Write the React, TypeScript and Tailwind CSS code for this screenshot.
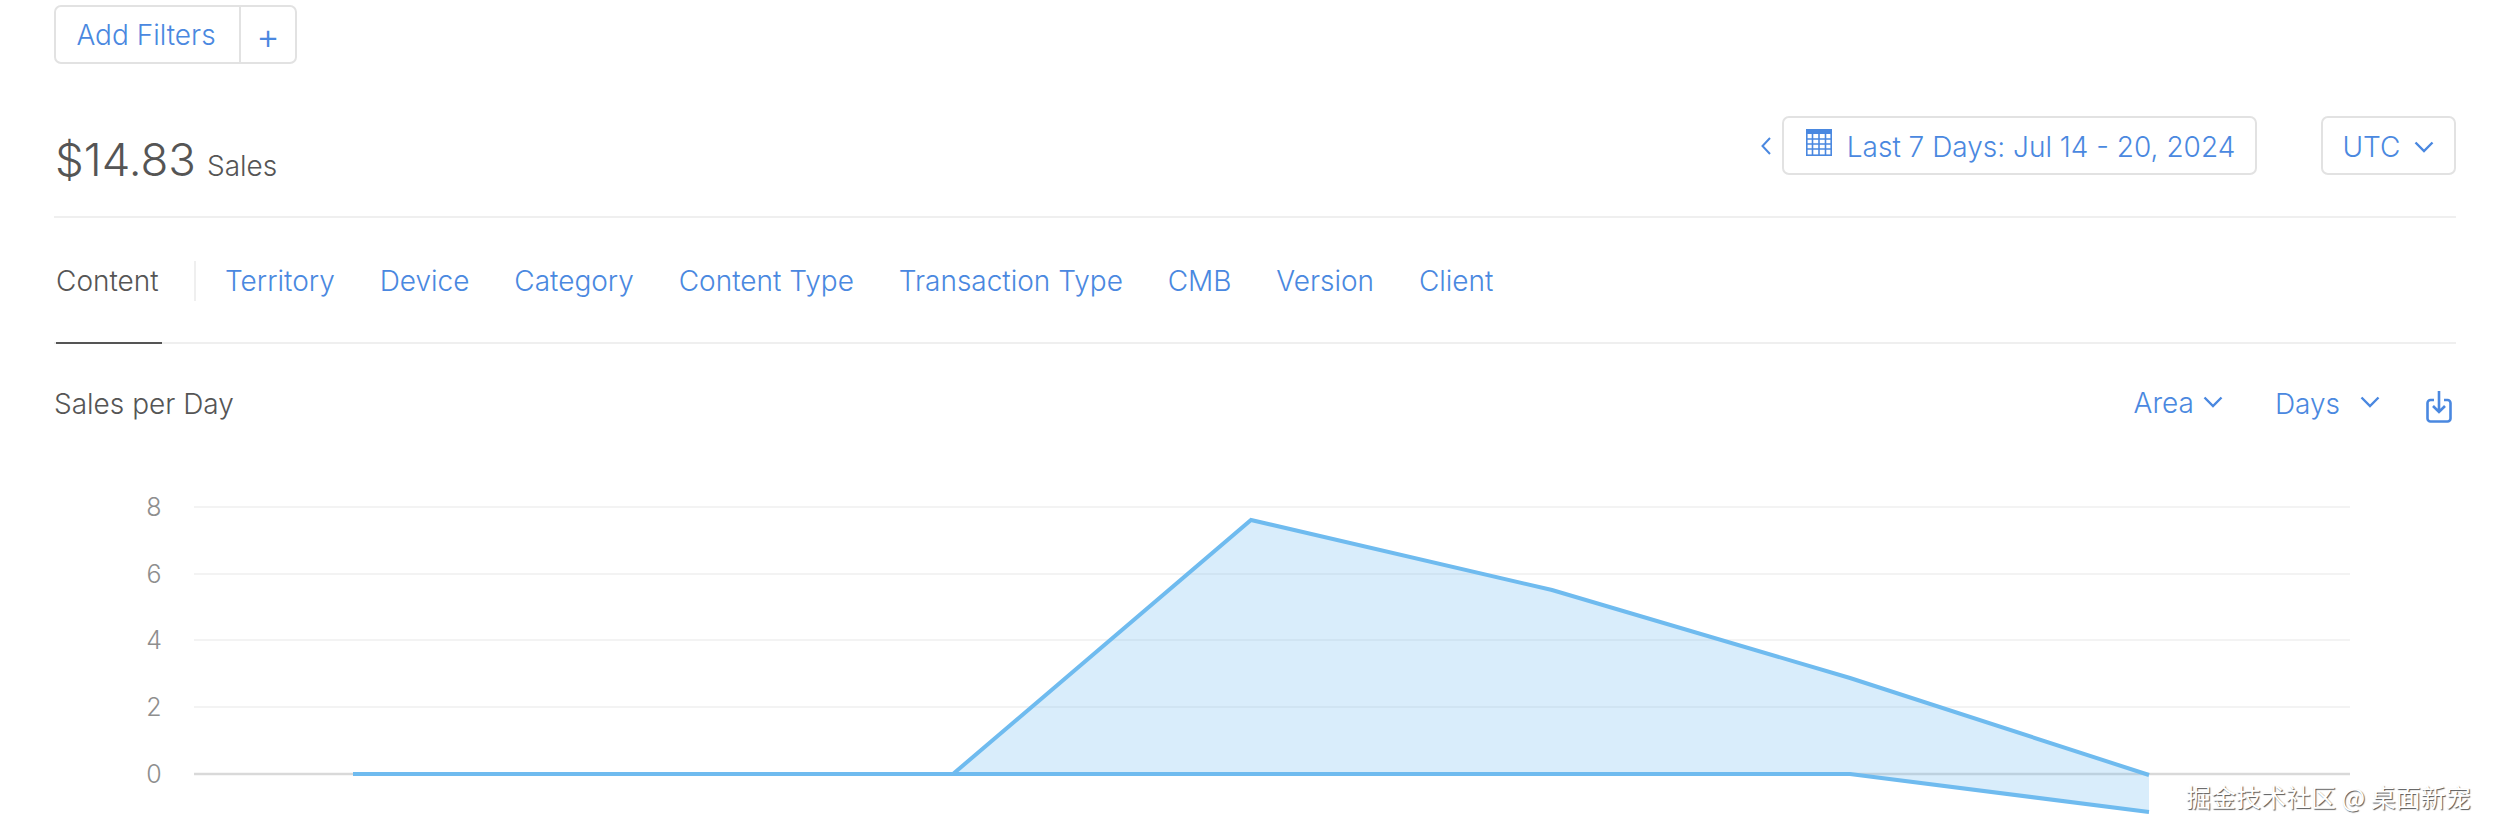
import React from 'react';

const tabs = ['Territory', 'Device', 'Category', 'Content Type', 'Transaction Type', 'CMB', 'Version', 'Client'];
const ticks = [
  { label: '8', y: 507 },
  { label: '6', y: 574 },
  { label: '4', y: 640 },
  { label: '2', y: 707 },
];

const Chevron = ({ className }: { className: string }) => (
  <svg viewBox="0 0 20 12" className={className} fill="none" stroke="#4a88e0" strokeWidth="2.4">
    <path d="M1.5 1.5 10 10l8.5-8.5" />
  </svg>
);

const CalendarIcon = () => (
  <svg viewBox="0 0 26 27" className="w-[26px] h-[27px] mr-[15px] mb-[8px]" fill="none" stroke="#4a88e0" strokeWidth="1.6">
    <rect x="0" y="0" width="26" height="5" fill="#4a88e0" stroke="none" />
    <rect x="0.8" y="4" width="24.4" height="22.2" />
    <path d="M0 10h26M0 15h26M0 20h26M6.5 5v21M13 5v21M19.5 5v21" />
  </svg>
);

const SalesChart = () => (
  <svg viewBox="0 0 2496 426" className="w-[2496px] h-[426px] block">
    <g transform="translate(0,-404)">
      {ticks.map((t) => (
        <g key={t.label}>
          <line x1="194" x2="2350" y1={t.y} y2={t.y} stroke="#f3f3f3" strokeWidth="2" />
          <text x="154" y={t.y + 9} textAnchor="middle" fontSize="25" fontWeight="300" fill="#8e8e8e">{t.label}</text>
        </g>
      ))}
      <line x1="194" x2="2350" y1="774" y2="774" stroke="#d9d9d9" strokeWidth="2.5" />
      <text x="154" y="783" textAnchor="middle" fontSize="25" fontWeight="300" fill="#8e8e8e">0</text>
      <path d="M953 774 1251 520 1552 590 1850 678 2149 774V813L1850 774Z" fill="#6cb8f0" fillOpacity="0.26" />
      <path d="M353 774H953L1251 520 1552 590 1850 678 2149 775" fill="none" stroke="#6fbbef" strokeWidth="4" />
      <path d="M353 774H1850L2149 812" fill="none" stroke="#6fbbef" strokeWidth="4" />
    </g>
  </svg>
);

export default function App() {
  return (
    <div className="relative w-[2496px] h-[830px] overflow-hidden bg-white text-[28px] font-light text-[#4a88e0] font-['Inter','Liberation_Sans',sans-serif]">
      <div className="pl-[54px] pr-[40px] pt-[5px]">
        <div className="flex w-[243px] h-[59px] items-center border-2 border-[#e2e2e2] rounded-[7px]">
          <div className="w-[185px] h-full flex items-center justify-center pr-[3px] border-r-2 border-[#e2e2e2]">Add Filters</div>
          <div className="flex-1 flex items-center justify-center pt-[3px] text-[36px] leading-none">+</div>
        </div>

        <div className="flex items-start justify-between h-[154px] border-b-2 border-[#efefef]">
          <div className="flex items-baseline pl-[1px] mt-[67px] text-[#555555]">
            <span className="text-[45.5px] leading-[58px]">$14.83</span>
            <span className="ml-[11px]">Sales</span>
          </div>
          <div className="flex items-center mt-[52px]">
            <svg viewBox="0 0 10 18" className="w-[10px] h-[18px] mr-[11px]" fill="none" stroke="#4a88e0" strokeWidth="2">
              <path d="M9 1 1.5 9 9 17" />
            </svg>
            <div className="flex items-center justify-center w-[475px] h-[59px] pt-[2px] pl-[2px] border-2 border-[#e2e2e2] rounded-[7px]">
              <CalendarIcon />
              Last 7 Days: Jul 14 - 20, 2024
            </div>
            <div className="flex items-center justify-center w-[135px] h-[59px] ml-[64px] pt-[2px] border-2 border-[#e2e2e2] rounded-[7px]">
              UTC
              <Chevron className="w-[20px] h-[12px] ml-[14px]" />
            </div>
          </div>
        </div>

        <div className="flex items-center h-[126px] pt-[2px] border-b-2 border-[#efefef]">
          <div className="relative flex items-center h-full w-[106px] ml-[2px] text-[#555555]">
            Content
            <div className="absolute left-0 right-0 bottom-[-2px] h-[2px] bg-[#555555]" />
          </div>
          <div className="w-[2px] h-[40px] bg-[#efefef] ml-[32px] mr-[29px]" />
          <div className="flex items-center gap-[44.8px]">
            {tabs.map((tab) => (
              <span key={tab}>{tab}</span>
            ))}
          </div>
        </div>

        <div className="flex items-center justify-between h-[115px] mt-[-1px] pt-[6px]">
          <span className="text-[#555555]">Sales per Day</span>
          <div className="flex items-center">
            <span className="mb-[2px]">Area</span>
            <Chevron className="w-[20px] h-[12px] ml-[9px] mb-[4px]" />
            <span className="ml-[52px]">Days</span>
            <Chevron className="w-[20px] h-[12px] ml-[20px] mb-[4px]" />
            <svg viewBox="0 0 26 32" className="w-[26px] h-[32px] ml-[46px] mr-[4px] mt-[6px]" fill="none" stroke="#4a88e0" strokeWidth="2.6">
              <path d="M8 9H4.5A3 3 0 0 0 1.5 12v15.5a3 3 0 0 0 3 3h17a3 3 0 0 0 3-3V12a3 3 0 0 0-3-3H18" />
              <path d="M13 0v21M7 15l6 6 6-6" />
            </svg>
          </div>
        </div>
      </div>

      <div className="absolute left-0 top-[404px]">
        <SalesChart />
      </div>

      <div className="absolute left-[2186px] top-[778px] text-[25px] font-normal text-white font-['Noto_Sans_CJK_SC','Noto_Sans',sans-serif] [text-shadow:1px_1px_1px_#555555]">
        掘金技术社区 @ 桌面新宠
      </div>
    </div>
  );
}
